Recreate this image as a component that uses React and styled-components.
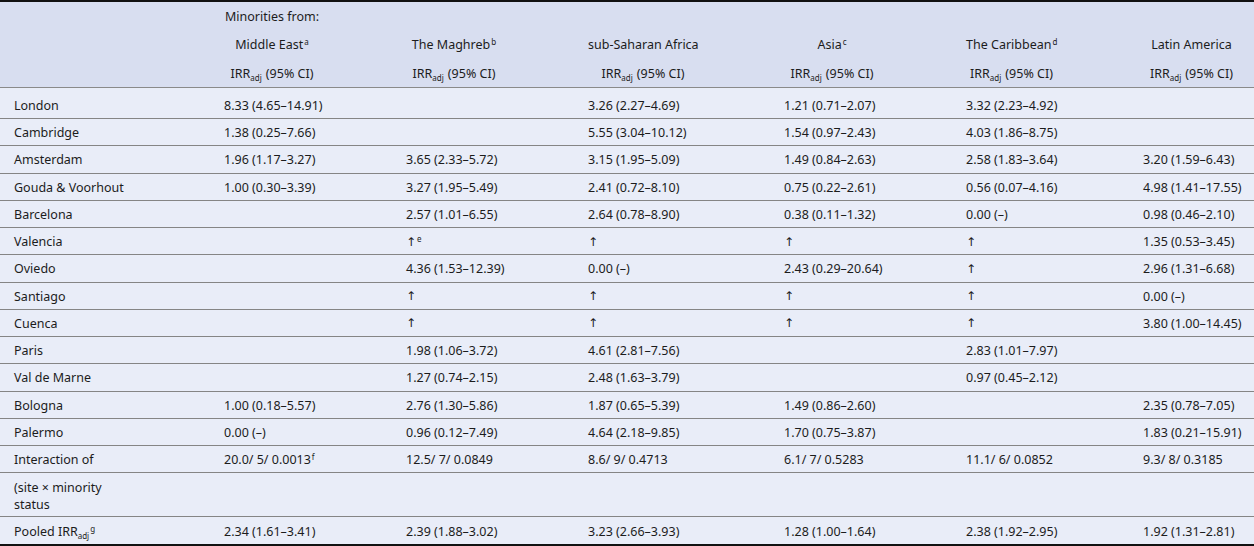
import React from 'react';
import styled, { createGlobalStyle } from 'styled-components';

const COLS = '181px 182px 182px 196px 182px 177px 154px';

const GlobalStyle = createGlobalStyle`
  html, body {
    margin: 0;
    padding: 0;
    background: #ffffff;
  }
`;

const Table = styled.div`
  width: 1254px;
  border-top: 2px solid #111;
  border-bottom: 2px solid #111;
  font-family: 'Noto Sans', 'Open Sans', sans-serif;
  font-size: 12.5px;
  color: #1c1c1c;
`;

const Head = styled.div`
  background: #d8def0;
  border-bottom: 1px solid #8a8a8a;
`;

const Body = styled.div`
  background: #e9edf8;
`;

const Row = styled.div`
  display: grid;
  grid-template-columns: ${COLS};
  align-items: center;
  box-sizing: border-box;
  height: ${props => props.$h}px;
  padding-top: ${props => props.$pt || 0}px;
  border-bottom: ${props => (props.$line ? '1px solid #858585' : 'none')};
`;

const Cell = styled.div`
  padding-left: ${props => (props.$first ? 14 : 43)}px;
  line-height: 17px;
  white-space: nowrap;
`;

const HeadCell = styled.div`
  text-align: center;
  padding: 1px ${props => (props.$last ? 14 : 43)}px 0
    ${props => (props.$first ? 14 : 43)}px;
  white-space: nowrap;
  line-height: 17px;
`;

const Sup = styled.sup`
  font-size: 8px;
  line-height: 0;
  vertical-align: 0;
  position: relative;
  top: -4px;
  margin-left: 1px;
`;

const Sub = styled.sub`
  font-size: 8px;
  line-height: 0;
  vertical-align: 0;
  position: relative;
  top: 3px;
  margin-right: ${props => (props.$tight ? 0 : 4)}px;
`;

const Arrow = styled.span`
  font-family: 'DejaVu Sans', sans-serif;
  font-size: 12px;
`;

const Irr = () => (
  <>
    IRR<Sub>adj</Sub>(95% CI)
  </>
);

const Up = ({ note }) => (
  <>
    <Arrow>↑</Arrow>
    {note && <Sup>{note}</Sup>}
  </>
);

const regions = [
  { name: 'Middle East', note: 'a' },
  { name: 'The Maghreb', note: 'b' },
  { name: 'sub-Saharan Africa' },
  { name: 'Asia', note: 'c' },
  { name: 'The Caribbean', note: 'd' },
  { name: 'Latin America' },
];

const rows = [
  ['London', '8.33 (4.65–14.91)', '', '3.26 (2.27–4.69)', '1.21 (0.71–2.07)', '3.32 (2.23–4.92)', ''],
  ['Cambridge', '1.38 (0.25–7.66)', '', '5.55 (3.04–10.12)', '1.54 (0.97–2.43)', '4.03 (1.86–8.75)', ''],
  ['Amsterdam', '1.96 (1.17–3.27)', '3.65 (2.33–5.72)', '3.15 (1.95–5.09)', '1.49 (0.84–2.63)', '2.58 (1.83–3.64)', '3.20 (1.59–6.43)'],
  ['Gouda & Voorhout', '1.00 (0.30–3.39)', '3.27 (1.95–5.49)', '2.41 (0.72–8.10)', '0.75 (0.22–2.61)', '0.56 (0.07–4.16)', '4.98 (1.41–17.55)'],
  ['Barcelona', '', '2.57 (1.01–6.55)', '2.64 (0.78–8.90)', '0.38 (0.11–1.32)', '0.00 (–)', '0.98 (0.46–2.10)'],
  ['Valencia', '', 'UPE', 'UP', 'UP', 'UP', '1.35 (0.53–3.45)'],
  ['Oviedo', '', '4.36 (1.53–12.39)', '0.00 (–)', '2.43 (0.29–20.64)', 'UP', '2.96 (1.31–6.68)'],
  ['Santiago', '', 'UP', 'UP', 'UP', 'UP', '0.00 (–)'],
  ['Cuenca', '', 'UP', 'UP', 'UP', 'UP', '3.80 (1.00–14.45)'],
  ['Paris', '', '1.98 (1.06–3.72)', '4.61 (2.81–7.56)', '', '2.83 (1.01–7.97)', ''],
  ['Val de Marne', '', '1.27 (0.74–2.15)', '2.48 (1.63–3.79)', '', '0.97 (0.45–2.12)', ''],
  ['Bologna', '1.00 (0.18–5.57)', '2.76 (1.30–5.86)', '1.87 (0.65–5.39)', '1.49 (0.86–2.60)', '', '2.35 (0.78–7.05)'],
  ['Palermo', '0.00 (–)', '0.96 (0.12–7.49)', '4.64 (2.18–9.85)', '1.70 (0.75–3.87)', '', '1.83 (0.21–15.91)'],
];

const renderValue = v => {
  if (v === 'UP') return <Up />;
  if (v === 'UPE') return <Up note="e" />;
  return v;
};

const DataRow = ({ cells, h, pt }) => (
  <Row $h={h} $pt={pt} $line>
    {cells.map((c, i) => (
      <Cell key={i} $first={i === 0}>
        {renderValue(c)}
      </Cell>
    ))}
  </Row>
);

const App = () => (
  <>
    <GlobalStyle />
    <Table>
      <Head>
        <Row $h={28}>
          <HeadCell $first />
          <HeadCell>Minorities from:</HeadCell>
        </Row>
        <Row $h={28}>
          <HeadCell $first />
          {regions.map((r, i) => (
            <HeadCell key={r.name} $last={i === regions.length - 1}>
              {r.name}
              {r.note && <Sup>{r.note}</Sup>}
            </HeadCell>
          ))}
        </Row>
        <Row $h={29}>
          <HeadCell $first />
          {regions.map((r, i) => (
            <HeadCell key={r.name} $last={i === regions.length - 1}>
              <Irr />
            </HeadCell>
          ))}
        </Row>
      </Head>
      <Body>
        {rows.map((r, i) => (
          <DataRow key={r[0]} cells={r} h={i === 0 ? 31 : 27.25} pt={i === 0 ? 5 : 1} />
        ))}
        <Row $h={27} $pt={1} $line>
          <Cell $first>Interaction of</Cell>
          <Cell>
            20.0/ 5/ 0.0013<Sup>f</Sup>
          </Cell>
          <Cell>12.5/ 7/ 0.0849</Cell>
          <Cell>8.6/ 9/ 0.4713</Cell>
          <Cell>6.1/ 7/ 0.5283</Cell>
          <Cell>11.1/ 6/ 0.0852</Cell>
          <Cell>9.3/ 8/ 0.3185</Cell>
        </Row>
        <Row $h={44} $pt={3} $line>
          <Cell $first>
            (site × minority
            <br />
            status
          </Cell>
        </Row>
        <Row $h={27} $pt={1}>
          <Cell $first>
            Pooled IRR<Sub $tight>adj</Sub>
            <Sup>g</Sup>
          </Cell>
          <Cell>2.34 (1.61–3.41)</Cell>
          <Cell>2.39 (1.88–3.02)</Cell>
          <Cell>3.23 (2.66–3.93)</Cell>
          <Cell>1.28 (1.00–1.64)</Cell>
          <Cell>2.38 (1.92–2.95)</Cell>
          <Cell>1.92 (1.31–2.81)</Cell>
        </Row>
      </Body>
    </Table>
  </>
);

export default App;
